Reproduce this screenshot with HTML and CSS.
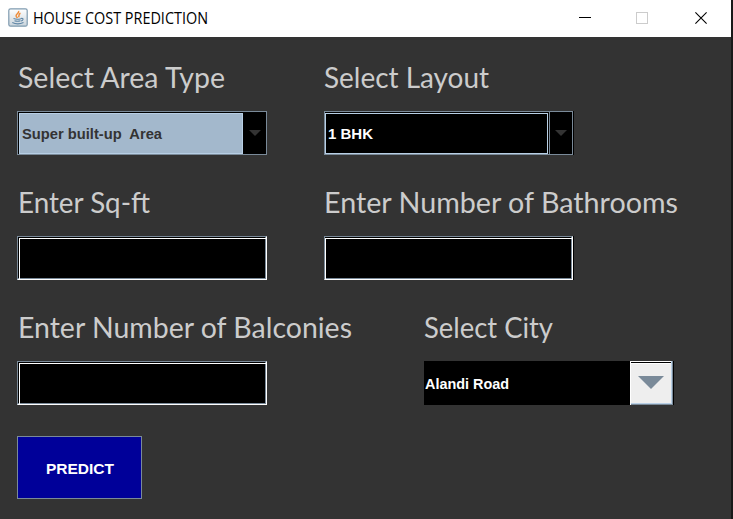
FILE: index.html
```
<!DOCTYPE html>
<html lang="en">
<head>
<meta charset="utf-8">
<title>HOUSE COST PREDICTION</title>
<link rel="stylesheet" href="styles.css">
</head>
<body>
<div class="window">
  <header class="titlebar">
    <svg class="app-icon" width="20" height="19" viewBox="0 0 20 19">
      <defs><linearGradient id="g" x1="0" y1="0" x2="0" y2="1"><stop offset="0" stop-color="#fff"/><stop offset="1" stop-color="#c9d4dc"/></linearGradient></defs>
      <rect x=".8" y=".8" width="18.4" height="17.4" rx="1.8" fill="url(#g)" stroke="#7f9bb0" stroke-width="1.2"/>
      <path d="M10.5 3C12 5 7 6 8.2 8.4L9.5 10M12.5 5.3C9.8 6.4 11.8 7.5 10.5 9.2" fill="none" stroke="#ee8b38" stroke-width="1.5"/>
      <path d="M5.5 10.6Q9 11.8 13 10.7M6.5 12.7Q9.5 13.7 12.5 12.7M13 10.5C16 9.8 15.5 12.5 13 13M4.3 14.5Q9.5 17.2 15.5 14.6" fill="none" stroke="#5f86a6" stroke-width="1.1"/>
    </svg>
    <svg class="title" width="180" height="37"><text x="0" y="24" textLength="175" lengthAdjust="spacingAndGlyphs">HOUSE COST PREDICTION</text></svg>
    <div class="controls">
      <svg width="12" height="12" viewBox="0 0 12 12"><path d="M0 5.5H12" stroke="#000"/></svg>
      <svg width="12" height="12" viewBox="0 0 12 12"><rect x=".5" y=".5" width="11" height="11" fill="none" stroke="#ccc"/></svg>
      <svg width="12" height="12" viewBox="0 0 12 12"><path d="M.4 .4L11.6 11.6M11.6 .4L.4 11.6" stroke="#000" stroke-width="1.1"/></svg>
    </div>
  </header>
  <main class="form">
    <div class="row">
      <div class="cell">
        <svg class="label"><text x="1" y="31" textLength="207" lengthAdjust="spacingAndGlyphs">Select Area Type</text></svg>
        <div class="combo focused"><div class="value"><svg width="200" height="40"><text x="2" y="25" textLength="140" lengthAdjust="spacingAndGlyphs">Super built-up&#160; Area</text></svg></div><div class="arrow"><svg width="12" height="6"><path d="M0 0H12L6 6Z" fill="#333"/></svg></div></div>
      </div>
      <div class="cell">
        <svg class="label"><text x="0" y="31" textLength="165" lengthAdjust="spacingAndGlyphs">Select Layout</text></svg>
        <div class="combo layout"><div class="value"><svg width="200" height="40"><text x="2" y="25" textLength="45" lengthAdjust="spacingAndGlyphs">1 BHK</text></svg></div><div class="arrow"><svg width="12" height="6"><path d="M0 0H12L6 6Z" fill="#333"/></svg></div></div>
      </div>
    </div>
    <div class="row">
      <div class="cell">
        <svg class="label"><text x="1" y="31" textLength="132" lengthAdjust="spacingAndGlyphs">Enter Sq-ft</text></svg>
        <div class="field"></div>
      </div>
      <div class="cell">
        <svg class="label"><text x="0" y="31" textLength="354" lengthAdjust="spacingAndGlyphs">Enter Number of Bathrooms</text></svg>
        <div class="field tight"></div>
      </div>
    </div>
    <div class="row city-row">
      <div class="cell">
        <svg class="label"><text x="1" y="31" textLength="334" lengthAdjust="spacingAndGlyphs">Enter Number of Balconies</text></svg>
        <div class="field"></div>
      </div>
      <div class="cell">
        <svg class="label"><text x="0" y="31" textLength="129" lengthAdjust="spacingAndGlyphs">Select City</text></svg>
        <div class="combo city"><div class="value"><svg width="200" height="44"><text x="1" y="28" textLength="84" lengthAdjust="spacingAndGlyphs">Alandi Road</text></svg></div><div class="city-arrow"><svg width="26" height="13"><path d="M0 0H26L13 13Z" fill="#7a8a99"/></svg></div></div>
      </div>
    </div>
    <button class="predict"><svg width="68" height="20"><text x="0" y="15" textLength="68" lengthAdjust="spacingAndGlyphs">PREDICT</text></svg></button>
  </main>
</div>
</body>
</html>
```
FILE: styles.css
```
* { box-sizing: border-box; }
body { margin: 0; background: #191919; overflow: hidden; }
svg { display: block; overflow: visible; }
.window { width: 731px; height: 519px; background: #333; }
.titlebar { display: flex; align-items: center; height: 37px; padding: 0 24px 0 8px; background: #fff; }
.title { margin-left: 5px; font: 15.5px "Open Sans", sans-serif; }
.app-icon { margin-top: -2px; }
.controls { display: flex; gap: 46px; margin: -1px 0 0 auto; }
.controls svg:first-child, .controls svg:nth-child(2) { margin-left: -1px; margin-right: 0; }
.controls svg:last-child { margin-left: 1px; }
.form { padding: 20px 0 0 17px; }
.row { display: grid; grid-template-columns: 307px 1fr; margin-bottom: 27px; }
.city-row { grid-template-columns: 407px 1fr; margin-bottom: 31px; }
.label { width: 300px; height: 54px; font: 28px Lato, sans-serif; fill: #ccc; }
.combo, .predict { font: bold 15px "Liberation Sans", Arial, sans-serif; }
.combo { display: flex; width: 250px; height: 44px; background: #000; border: 1px solid #7a8a99; fill: #fff; }
.focused .value { width: 224px; margin: 1px 0 0 1px; border: 1px solid #b8cfe5; background: #a3b8cc; fill: #333; }
.arrow { flex: 1; display: flex; align-items: center; justify-content: center; }
.layout { width: 249px; box-shadow: 1px 0 #000; }
.layout .value { width: 224px; margin-top: 1px; border: 1px solid #b8cfe5; }
.layout .value { width: 223px; margin-right: 1px; }
.layout .arrow { border-left: 1px solid #7a8a99; }
.city { border: 0; }
.city .value { width: 206px; }
.city-arrow { width: 43px; height: 44px; display: flex; align-items: center; justify-content: center; padding: 0 1px 1px 0; background: linear-gradient(#fff 1px, #000 1px 2px, #fff 2px 3px, #eee 3px); box-shadow: inset 1px 0 #fff, inset -1px -1px #7a8a99, inset -2px -2px #b8cfe5; }
.field { width: 250px; height: 44px; padding: 1px 0 0 1px; background: #000; border: 1px solid #fff; border-top-color: #7a8a99; border-left-color: #7a8a99; box-shadow: inset -1px -1px #7a8a99; }
.field::before { content: ""; display: block; height: 41px; border-top: 1px solid #fff; border-left: 1px solid #fff; }
.tight { width: 249px; padding-left: 0; box-shadow: inset -1px -1px #7a8a99, 1px 0 #000; }
.predict { display: flex; align-items: center; justify-content: center; width: 125px; height: 63px; padding: 2px 0 0; border: 1px solid #7a8a99; background: #009; fill: #fff; }
```
